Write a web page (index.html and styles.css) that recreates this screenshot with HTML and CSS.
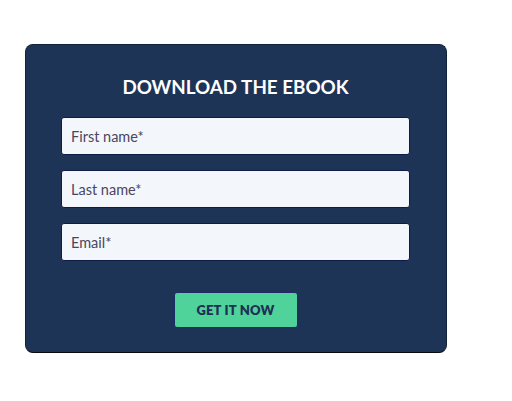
FILE: index.html
```html
<!DOCTYPE html>
<html>
<head>
<meta charset="utf-8">
<link rel="stylesheet" href="styles.css">
</head>
<body>
<div class="card">
  <h2 class="title">DOWNLOAD THE EBOOK</h2>
  <form class="form">
    <input class="field" type="text" placeholder="First name*">
    <input class="field" type="text" placeholder="Last name*">
    <input class="field" type="email" placeholder="Email*">
    <button class="btn" type="button">GET IT NOW</button>
  </form>
</div>
</body>
</html>
```
FILE: styles.css
```css
html, body {
  margin: 0;
  padding: 0;
  background: #ffffff;
}
body {
  padding: 44px 0 0 25px;
  font-family: "Lato", "Open Sans", sans-serif;
}
.card {
  width: 422px;
  height: 309px;
  box-sizing: border-box;
  background: #1e3456;
  border: 1px solid #14213a;
  border-bottom-color: #0b0b0b;
  border-radius: 8px;
  padding: 27px 36px 0 35px;
}
.title {
  margin: 0;
  text-align: center;
  color: #ffffff;
  font-size: 18.8px;
  font-weight: 700;
  line-height: 29px;
  letter-spacing: 0;
}
.form {
  display: flex;
  flex-direction: column;
  align-items: center;
  margin-top: 16px;
  gap: 15px;
}
.field {
  width: 349px;
  height: 38px;
  box-sizing: border-box;
  border: 1px solid #0e1a47;
  border-radius: 3px;
  background: #f3f7fb;
  padding: 0 9px;
  font-family: inherit;
  font-size: 14.5px;
  color: #3e3e55;
  outline: none;
}
.field::placeholder {
  color: #4a4660;
  opacity: 1;
}
.btn {
  margin-top: 16px;
  width: 124px;
  height: 36px;
  box-sizing: border-box;
  background: #4fd39a;
  border: 1px solid #1c2a66;
  border-radius: 3px;
  color: #1f2f55;
  font-family: inherit;
  font-weight: 800;
  font-size: 13px;
  letter-spacing: 0.2px;
  padding: 0;
}
```
